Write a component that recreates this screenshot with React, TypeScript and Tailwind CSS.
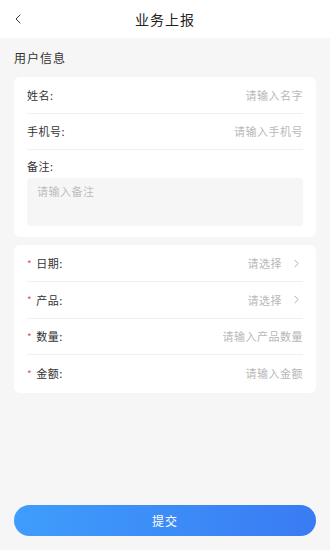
import { ChevronLeft, ChevronRight } from "lucide-react";

const font = { fontFamily: '"Noto Sans CJK SC", "Noto Sans", sans-serif' };

function InputRow({ label, placeholder, required, select, last }: { label: string; placeholder: string; required?: boolean; select?: boolean; last?: boolean }) {
  return (
    <div className={`flex items-center h-[36.5px] ${last ? "" : "border-b border-[#f0f0f0]"}`}>
      <div className="flex items-center text-[11px] text-[#333] tracking-[0.5px]">
        {required && <span className="text-[#e05656] mr-1 text-[10px]">*</span>}
        {label}:
      </div>
      <div className="ml-auto flex items-center text-[11px] text-[#b8b8b8] tracking-[0.5px]">
        {placeholder}
        {select && <ChevronRight className="ml-2 w-[13px] h-[13px] text-[#999]" strokeWidth={1.5} />}
      </div>
    </div>
  );
}

export default function App() {
  return (
    <div style={font} className="w-[330px] h-[550px] bg-[#f6f6f6] flex flex-col">
      <div className="h-[38px] bg-white flex items-center relative">
        <ChevronLeft className="absolute left-[10px] w-4 h-4 text-[#333]" strokeWidth={1.5} />
        <div className="flex-1 text-center text-[14px] text-[#222] tracking-[1px]">业务上报</div>
      </div>
      <div className="px-[14px] pt-[11px] text-[12px] text-[#333] tracking-[1px]">用户信息</div>
      <div className="mx-[14px] mt-[10px] bg-white rounded-[6px] px-[13px] pb-[11px]">
        <InputRow label="姓名" placeholder="请输入名字" />
        <InputRow label="手机号" placeholder="请输入手机号" />
        <div className="pt-[8px] text-[11px] text-[#333] tracking-[0.5px]">备注:</div>
        <div className="mt-[3px] h-[48px] bg-[#f6f6f6] rounded-[4px] px-[10px] py-[5px] text-[11px] text-[#bdbdbd] tracking-[0.5px]">请输入备注</div>
      </div>
      <div className="mx-[14px] mt-[8px] bg-white rounded-[6px] px-[13px] py-[1px]">
        <InputRow required select label="日期" placeholder="请选择" />
        <InputRow required select label="产品" placeholder="请选择" />
        <InputRow required label="数量" placeholder="请输入产品数量" />
        <InputRow required last label="金额" placeholder="请输入金额" />
      </div>
      <div className="flex-1" />
      <div className="px-[14px] pb-[14px]">
        <button className="w-full h-[31px] rounded-full bg-gradient-to-r from-[#3f9dfc] to-[#3a7bf3] text-white text-[12px] tracking-[1px]">提交</button>
      </div>
    </div>
  );
}
